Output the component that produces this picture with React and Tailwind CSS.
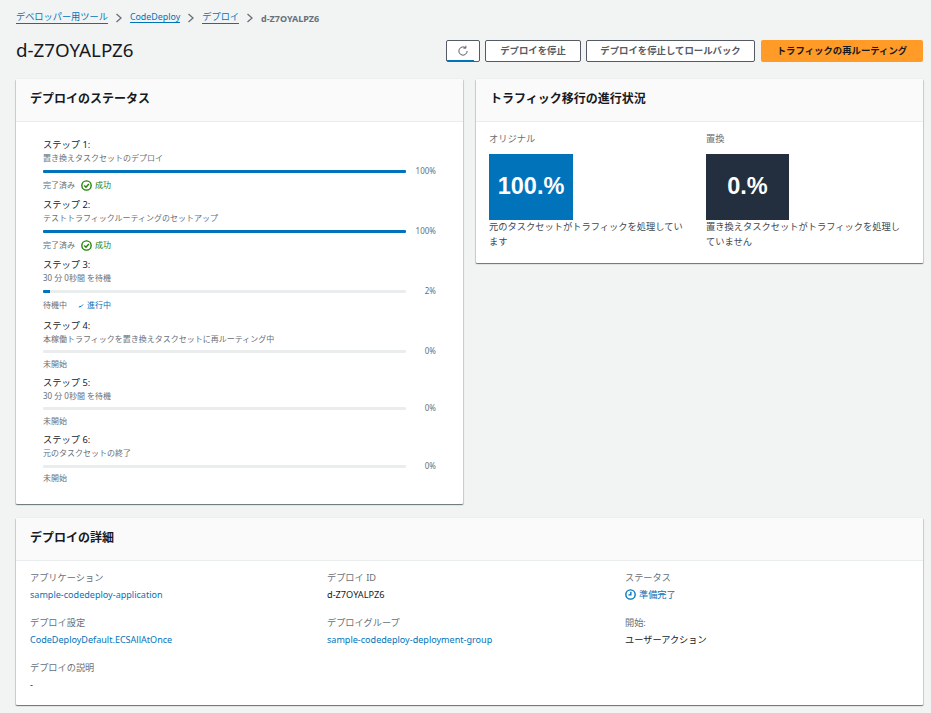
import React from "react";

const FONT = '"Noto Sans", "Noto Sans CJK JP", sans-serif';

function Chevron() {
  return (
    <svg width="8" height="10" viewBox="0 0 8 10" fill="none" stroke="#687078" strokeWidth="1.3" className="shrink-0">
      <path d="M1.5 1 L6 5 L1.5 9" />
    </svg>
  );
}

function Btn({ children, w, primary }) {
  return (
    <div
      className={`h-[22px] flex items-center justify-center rounded-[2px] text-[9.4px] font-bold leading-none ${w} ${
        primary ? "bg-[#ff9b26] text-[#16191f]" : "bg-white border border-[#545b64] text-[#545b64]"
      }`}
    >
      {children}
    </div>
  );
}

function Card({ title, children, className }) {
  return (
    <section className={`bg-white rounded-[1px] shadow-[0_1px_1px_0_rgba(0,28,36,0.45),1px_1px_1px_0_rgba(0,28,36,0.12),-1px_1px_1px_0_rgba(0,28,36,0.12),0_0_1px_0_rgba(0,28,36,0.2)] ${className}`}>
      <div className="h-[43px] bg-[#fafafa] border-b border-[#eaeded] flex items-center px-[14px] pb-[3px]">
        <h2 className="text-[12px] font-bold text-[#16191f] leading-none">{title}</h2>
      </div>
      {children}
    </section>
  );
}

function CheckIcon() {
  return (
    <svg width="11" height="11" viewBox="0 0 16 16" fill="none" stroke="#1d8102" strokeWidth="2">
      <circle cx="8" cy="8" r="6.8" />
      <path d="M4.8 8 L7.2 10.4 L11.4 5.8" />
    </svg>
  );
}

function Step({ n, desc, pct, status, badge, mt, barGap = "mt-[1px]", statusH = "h-[14px]" }) {
  return (
    <div className={mt}>
      <div className="text-[9.25px] leading-[12px] text-[#16191f]">ステップ {n}:</div>
      <div className="text-[8px] leading-[12px] text-[#687078] mt-[1px]">{desc}</div>
      <div className={`flex items-center h-[12px] ${barGap}`}>
        <div className="w-[363px] h-[3px] bg-[#eaeded] rounded-[1px] overflow-hidden">
          <div className="h-full bg-[#0073bb]" style={{ width: `${pct}%` }} />
        </div>
        <div className="w-[30px] text-right text-[8px] text-[#687078] leading-none">{pct}%</div>
      </div>
      <div className={`flex items-center text-[8px] text-[#687078] leading-none ${badge ? "h-[16px]" : statusH}`}>
        <span>{status}</span>
        {badge === "ok" && (
          <span className="flex items-center ml-[6px] gap-[3px] text-[#1d8102]">
            <CheckIcon />
            成功
          </span>
        )}
        {badge === "run" && (
          <span className="flex items-center ml-[11px] gap-[3px] text-[#0073bb]">
            <svg width="6" height="6" viewBox="0 0 6 6" fill="none" stroke="#0073bb" strokeWidth="1">
              <path d="M0.8 5 Q3.5 5 5 2.5" />
            </svg>
            進行中
          </span>
        )}
      </div>
    </div>
  );
}

function Field({ label, children, className }) {
  return (
    <div className={className}>
      <div className="text-[9.2px] leading-[13px] text-[#687078]">{label}</div>
      <div className="text-[9.2px] leading-[13px] mt-[4px] text-[#16191f]">{children}</div>
    </div>
  );
}

const Link = ({ children }) => <span className="text-[#0073bb] text-[9.05px]">{children}</span>;

function Share({ label, value, bg, w, text }) {
  return (
    <div className="w-[201px]">
      <div className="text-[9.25px] leading-[13px] text-[#687078]">{label}</div>
      <div className={`${bg} ${w} h-[66px] mt-[9px] flex items-center justify-center text-white font-bold text-[23.5px] leading-none`} style={{ fontFamily: '"Liberation Sans", sans-serif' }}>
        {value}
      </div>
      <div className="text-[9.25px] leading-[15px] text-[#414750] -mt-[1px]">{text}</div>
    </div>
  );
}

export default function App() {
  return (
    <div className="w-[931px] h-[713px] overflow-hidden bg-[#f2f3f3] pl-[16px] pr-[8px]" style={{ fontFamily: FONT }}>
      <nav className="flex items-center h-[12px] pt-[12px] box-content text-[9.2px] leading-none gap-[7px]">
        <span className="text-[#0073bb] border-b border-[#0073bb] pb-[1px]">デベロッパー用ツール</span>
        <Chevron />
        <span className="text-[#0073bb] border-b border-[#0073bb] pb-[1px] text-[8.9px]">CodeDeploy</span>
        <Chevron />
        <span className="text-[#0073bb] border-b border-[#0073bb] pb-[1px]">デプロイ</span>
        <Chevron />
        <span className="text-[#687078] font-bold text-[9px]">d-Z7OYALPZ6</span>
      </nav>

      <header className="flex items-center justify-between h-[22px] mt-[16px]">
        <h1 className="text-[18.8px] text-[#16191f] leading-none pb-[2px]">d-Z7OYALPZ6</h1>
        <div className="flex items-center gap-[5px]">
          <div className="w-[34px] h-[22px] bg-white border border-[#545b64] rounded-[2px] flex items-center justify-center relative">
            <svg width="12" height="12" viewBox="0 0 16 16" fill="none" stroke="#545b64" strokeWidth="1.3">
              <path d="M13.5 8 A5.5 5.5 0 1 1 11.5 3.8" />
              <path d="M11.8 1 V4.2 H8.6" />
            </svg>
            <div className="absolute left-0 right-[5px] bottom-0 h-[1.5px] bg-[#0073bb]" />
          </div>
          <Btn w="w-[96px]">デプロイを停止</Btn>
          <Btn w="w-[169px]">デプロイを停止してロールバック</Btn>
          <Btn w="w-[162px] ml-[1px]" primary>トラフィックの再ルーティング</Btn>
        </div>
      </header>

      <div className="flex items-start justify-between mt-[17px]">
        <Card title="デプロイのステータス" className="w-[447px] h-[425px]">
          <div className="pl-[27px] pt-[17px]">
            <Step n="1" desc="置き換えタスクセットのデプロイ" pct={100} status="完了済み" badge="ok" />
            <Step n="2" desc="テストトラフィックルーティングのセットアップ" pct={100} status="完了済み" badge="ok" mt="mt-[6px]" />
            <Step n="3" desc="30 分 0秒間 を待機" pct={2} status="待機中" badge="run" mt="mt-[6px]" />
            <Step n="4" desc="本稼働トラフィックを置き換えタスクセットに再ルーティング中" pct={0} status="未開始" mt="mt-[7px]" barGap="mt-0" />
            <Step n="5" desc="30 分 0秒間 を待機" pct={0} status="未開始" mt="mt-[6px]" barGap="mt-0" />
            <Step n="6" desc="元のタスクセットの終了" pct={0} status="未開始" mt="mt-[6px]" statusH="h-[12px]" />
          </div>
        </Card>

        <Card title="トラフィック移行の進行状況" className="w-[447px] h-[184px]">
          <div className="flex gap-[16px] pl-[13px] pt-[10px]">
            <Share label="オリジナル" value="100.%" bg="bg-[#0073bb]" w="w-[84px]" text="元のタスクセットがトラフィックを処理しています" />
            <Share label="置換" value="0.%" bg="bg-[#232f3e]" w="w-[83px]" text="置き換えタスクセットがトラフィックを処理していません" />
          </div>
        </Card>
      </div>

      <Card title="デプロイの詳細" className="w-[907px] h-[187px] mt-[14px]">
        <div className="grid grid-cols-[297px_298px_1fr] px-[14px] pt-[10px] gap-y-[15px]">
          <Field label="アプリケーション"><Link>sample-codedeploy-application</Link></Field>
          <Field label="デプロイ ID">d-Z7OYALPZ6</Field>
          <Field label="ステータス">
            <span className="flex items-center gap-[3px] text-[#0073bb]">
              <svg width="11" height="11" viewBox="0 0 16 16" fill="none" stroke="#0073bb" strokeWidth="2">
                <circle cx="8" cy="8" r="6.8" />
                <path d="M8.5 4 V8.6 H5" />
              </svg>
              準備完了
            </span>
          </Field>
          <Field label="デプロイ設定"><Link>CodeDeployDefault.ECSAllAtOnce</Link></Field>
          <Field label="デプロイグループ"><Link>sample-codedeploy-deployment-group</Link></Field>
          <Field label="開始:">ユーザーアクション</Field>
          <Field label="デプロイの説明">-</Field>
        </div>
      </Card>
    </div>
  );
}
